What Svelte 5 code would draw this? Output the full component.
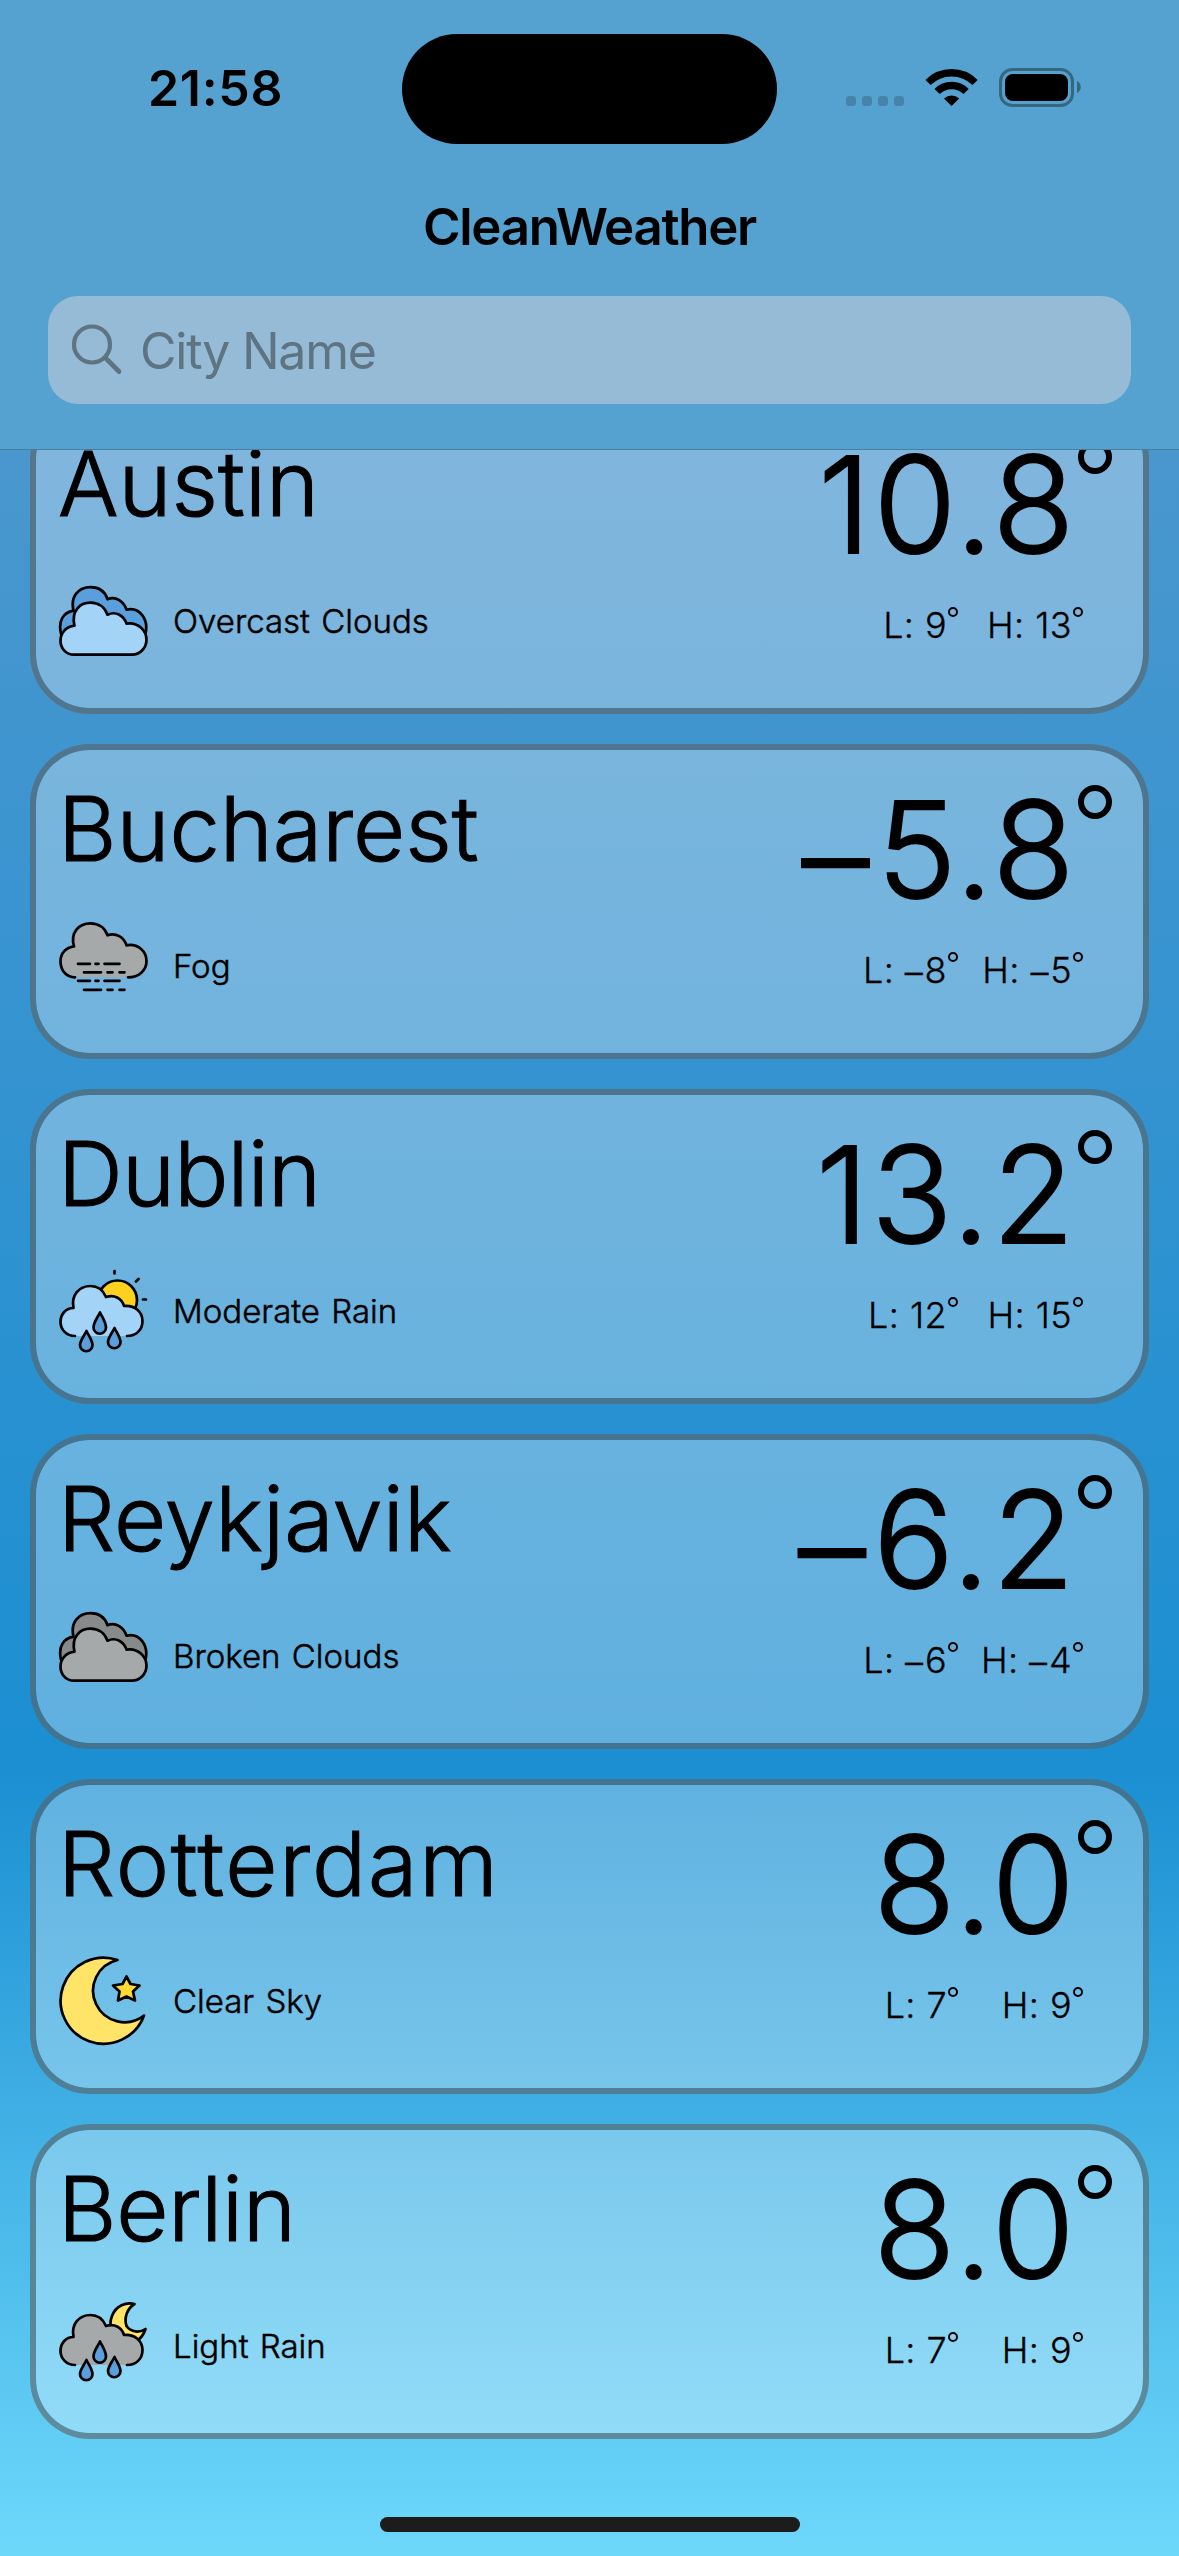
<script>
  const cities = [
    { name: 'Austin', tracking: 0, temp: '10.8', text: 'Overcast Clouds', icon: 'clouds-day', low: '9', high: '13' },
    { name: 'Bucharest', tracking: 0, temp: '–5.8', text: 'Fog', icon: 'fog', low: '–8', high: '–5' },
    { name: 'Dublin', tracking: -0.8, temp: '13.2', text: 'Moderate Rain', icon: 'rain-day', low: '12', high: '15' },
    { name: 'Reykjavik', tracking: 0.2, temp: '–6.2', text: 'Broken Clouds', icon: 'clouds-gray', low: '–6', high: '–4' },
    { name: 'Rotterdam', tracking: 1.8, temp: '8.0', text: 'Clear Sky', icon: 'moon', low: '7', high: '9' },
    { name: 'Berlin', tracking: -0.2, temp: '8.0', text: 'Light Rain', icon: 'rain-night', low: '7', high: '9' }
  ];
</script>

{#snippet degrees(value)}
  {#if value.startsWith('–')}<span class="sign">–</span>{value.slice(1)}{:else}{value}{/if}
{/snippet}

{#snippet drops()}
  <g fill="#5a9fdc">
    <path d="M42 43.500c3 6 6 10 6 15a6 6 0 0 1-12.500 0c0-5 3.500-9 6.500-15z" />
    <path d="M28.500 62c3 6 6 10 6 14a6 6 0 0 1-12.500 0c0-4 3.500-8 6.500-14z" />
    <path d="M56.500 59c3 6 6 10 6 14a6 6 0 0 1-12.500 0c0-4 3.500-8 6.500-14z" />
  </g>
{/snippet}

{#snippet icon(kind)}
  <svg class="icon" viewBox="0 0 90 90" fill="none" stroke="#000" stroke-width="2.700" stroke-linecap="round" stroke-linejoin="round">
    {#if kind === 'clouds-day' || kind === 'clouds-gray'}
      <g transform={kind === 'clouds-day' ? 'translate(0 1.700)' : 'translate(0 -7.300)'}>
        <path fill={kind === 'clouds-day' ? '#5a9fdc' : '#868a8b'} d="M3 56C0 43 5 35 15.500 33C12 18 21 9.500 32.500 9.500C41 9.500 47 14 49.500 21.500C58 18 66 24 68.500 32C81 29 91 41 87.500 56z" />
        <path fill={kind === 'clouds-day' ? '#a4d3f8' : '#a5a9aa'} d="M16 77C7.500 77 2.500 70 2.500 63C2.500 55 8 49 16.500 48C13 33 22 25 32.500 25C41 25 47 30 49.500 37C58 33 66 38 68.500 46C80 44 88.500 53 88.500 62C88.500 70 82 77 74 77z" />
      </g>
    {:else if kind === 'fog'}
      <g transform="translate(0 -5.700)">
        <path stroke="none" fill="#a5a9aa" d="M17 62C8 62 2.500 55 2.500 46C2.500 38 8 32 16 31C12 17 21 8 32.500 8C41 8 47 13 49.500 20C58 17 66 22 68.500 30C80 28 88.500 36 88.500 46C88.500 55 81 62 70 62z" />
        <path d="M17 62C8 62 2.500 55 2.500 46C2.500 38 8 32 16 31C12 17 21 8 32.500 8C41 8 47 13 49.500 20C58 17 66 22 68.500 30C80 28 88.500 36 88.500 46C88.500 55 81 62 70 62" />
        <path d="M20 48.500h12M37.500 48.500h3M46.500 48.500h15M26 57h17M49.500 57h5M61.500 57h5M20 65.500h12M37.500 65.500h3M46.500 65.500h15M26 74.500h17M49.500 74.500h5M61.500 74.500h5" />
      </g>
    {:else if kind === 'rain-day'}
      <g transform="translate(0 3)">
        <circle cx="59.500" cy="31" r="19.500" fill="#ffd11f" />
        <path d="M56.500 2v2.500M78 12.500l2.500-2.500M85 30.500h3" />
        <path stroke="none" fill="#a4d3f8" d="M17 67C8 67 2.500 60 2.500 53C2.500 45 8 39 15.500 39C13 26 21 17 32.500 17C40 17 45 21 48 28C57 25 64 30 66 37C77 36 84.500 43 84.500 52C84.500 61 78 67 69 67z" />
        <path d="M17 67C8 67 2.500 60 2.500 53C2.500 45 8 39 15.500 39C13 26 21 17 32.500 17C40 17 45 21 48 28C57 25 64 30 66 37C77 36 84.500 43 84.500 52C84.500 61 78 67 69 67" />
        {@render drops()}
      </g>
    {:else if kind === 'rain-night'}
      <g transform="translate(0 -3)">
        <path fill="#ffe468" d="M76.500 6A19 19 0 0 0 68.500 28C73 34.500 82 35 87.500 31C84 42 74 48 66 44C54 38 50 28 54 18C58 7.500 68 4 76.500 6z" />
        <path stroke="none" fill="#a5a9aa" d="M17 67C8 67 2.500 60 2.500 53C2.500 45 8 39 15.500 39C13 26 21 17 32.500 17C40 17 45 21 48 28C57 25 64 30 66 37C77 36 84.500 43 84.500 52C84.500 61 78 67 69 67z" />
        <path d="M17 67C8 67 2.500 60 2.500 53C2.500 45 8 39 15.500 39C13 26 21 17 32.500 17C40 17 45 21 48 28C57 25 64 30 66 37C77 36 84.500 43 84.500 52C84.500 61 78 67 69 67" />
        {@render drops()}
      </g>
    {:else}
      <path fill="#ffe468" d="M59.500 4A43 43 0 1 0 86 59.500A31.500 31.500 0 1 1 59.500 4z" />
      <path fill="#ffd934" d="M68.500 20.500l4 7.500 9 1.500-6.500 6 2 9-8.500-4-8.500 4 1.500-9-6.500-6 9.500-1.500z" />
    {/if}
  </svg>
{/snippet}

<div class="screen">
  <header>
    <div class="status">
      <div class="time">21:58</div>
      <div class="island"></div>
      <div class="indicators">
        <svg viewBox="0 0 250 50" width="250" height="50">
          <g fill="#4583ab">
            {#each [7, 23, 39, 55] as x}
              <rect {x} y="31" width="10" height="10" rx="3.500" />
            {/each}
          </g>
          <path d="M89.100 17.500A33.200 33.200 0 0 1 136.100 17.500M98.100 26.500A20.500 20.500 0 0 1 127.100 26.500" fill="none" stroke="#000" stroke-width="7.400" />
          <path d="M105 33.400A11.500 11.500 0 0 1 120.200 33.400L112.600 41z" />
          <rect x="161.500" y="4.500" width="72" height="36" rx="12" fill="none" stroke="#35677f" stroke-width="3" />
          <rect x="166" y="9" width="63" height="27" rx="8" />
          <path fill="#35677f" d="M238 16c5 2 5 10 0 12z" />
        </svg>
      </div>
    </div>
    <h1>CleanWeather</h1>
    <div class="search">
      <svg viewBox="0 0 52 52" width="52" height="52" fill="none" stroke="#5f7482" stroke-width="4.200" stroke-linecap="round"><circle cx="21" cy="20.500" r="18" /><path d="M34.500 34l13.500 13.500" stroke-width="4.800" /></svg>
      <span>City Name</span>
    </div>
  </header>
  <main>
    {#each cities as c}
      <article>
        <div class="left">
          <h2 style:letter-spacing="{c.tracking}px">{c.name}</h2>
          <div class="cond">{@render icon(c.icon)}<span>{c.text}</span></div>
        </div>
        <div class="right">
          <div class="temp"><span>{@render degrees(c.temp)}</span><i class="deg"></i></div>
          <div class="range">
            <span class="pair"><span>L: {@render degrees(c.low)}</span><i class="deg"></i></span>
            <span class="pair high"><span>H: {@render degrees(c.high)}</span><i class="deg"></i></span>
          </div>
        </div>
      </article>
    {/each}
  </main>
  <div class="home"></div>
</div>

<style>
  :global(body) { margin: 0; }
  .screen {
    box-sizing: border-box;
    position: relative;
    width: 1179px;
    height: 2556px;
    overflow: hidden;
    font-family: Inter, "Liberation Sans", sans-serif;
    color: #000;
    display: flex;
    flex-direction: column;
    background: linear-gradient(180deg, #5399ce 0, #4a97ce 450px, #1b8fd2 1770px, #6ed8fb 2556px);
  }
  header {
    box-sizing: border-box;
    flex: none;
    height: 450px;
    background: #55a1cf;
    border-bottom: 1px solid #467f9f;
    z-index: 1;
  }
  .status { height: 111px; padding-top: 34px; display: grid; grid-template-columns: 402px 375px 402px; }
  .time { font-size: 50px; font-weight: 600; line-height: 108px; padding-left: 148px; letter-spacing: 0.700px; }
  .island { height: 110px; background: #000; border-radius: 55px; }
  .indicators { padding: 31px 0 0 62px; }
  h1 { margin: 49px 0 0; height: 66px; line-height: 66px; font-size: 51px; font-weight: 600; text-align: center; letter-spacing: -1.300px; }
  .search {
    margin: 36px 48px 0;
    height: 108px;
    border-radius: 30px;
    background: #95bbd6;
    display: flex;
    align-items: center;
    gap: 17px;
    padding-left: 23px;
    color: #5f7482;
    font-size: 50px;
    letter-spacing: -1.250px;
  }
  .search span { padding-top: 2px; }
  main { flex: none; margin: -51px 30px 0; display: flex; flex-direction: column; gap: 30px; }
  article {
    box-sizing: border-box;
    height: 315px;
    border: 6px solid rgba(92, 97, 99, 0.6);
    border-radius: 60px;
    background: rgba(255, 255, 255, 0.3);
    background-clip: padding-box;
    display: flex;
    justify-content: space-between;
    padding: 24px 31px 0 22px;
    font-weight: 300;
  }
  h2 { margin: 0; height: 110px; line-height: 110px; font-size: 90px; font-weight: 300; -webkit-text-stroke: 1.2px #000; }
  .cond { margin-top: 37px; display: flex; align-items: center; height: 90px; gap: 25px; font-size: 33px; word-spacing: 2px; -webkit-text-stroke: 0.5px #000; }
  .icon { width: 90px; height: 90px; flex: none; }
  .right { display: flex; flex-direction: column; align-items: flex-end; }
  .temp { display: flex; align-items: flex-start; gap: 1px; height: 150px; font-size: 134px; line-height: 150px; letter-spacing: 2.5px; -webkit-text-stroke: 2px #000; }
  .sign { vertical-align: -0.05em; margin-right: 0.04em; }
  .deg { box-sizing: border-box; border-style: solid; border-color: #000; border-radius: 50%; }
  .temp .deg { width: 34px; height: 34px; border-width: 6px; margin-top: 11px; }
  .range { display: flex; margin: 21px 29px 0 0; font-size: 36px; line-height: 50px; letter-spacing: 0.4px; -webkit-text-stroke: 0.3px #000; }
  .pair { display: flex; justify-content: flex-end; gap: 1px; }
  .high { width: 125px; }
  .pair .deg { width: 10px; height: 10px; border-width: 2px; margin-top: 7px; }
  .home { position: absolute; left: 380px; top: 2517px; width: 420px; height: 15px; border-radius: 8px; background: #1c1c1c; }
</style>
